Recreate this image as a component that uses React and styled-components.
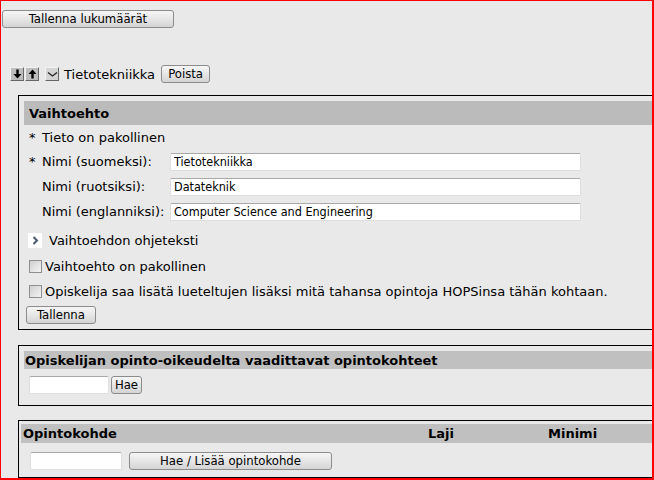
import React from "react";
import styled, { createGlobalStyle } from "styled-components";

const Global = createGlobalStyle`
  html, body { margin: 0; padding: 0; background: #e9e9e9; }
  body { font-family: "DejaVu Sans", Verdana, sans-serif; font-size: 13px; color: #000; }
`;

const Frame = styled.div`
  width: 654px;
  height: 480px;
  box-sizing: border-box;
  border-style: solid;
  border-color: #ff0000;
  border-width: 1px 2px 2px 1px;
  background: #e9e9e9;
  overflow: hidden;
  padding: 9px 0 0 1px;
`;

const Inner = styled.div`
  width: 720px;
`;

const Button = styled.button`
  box-sizing: border-box;
  height: ${p => p.$h || 18}px;
  width: ${p => p.$w}px;
  padding: 0;
  margin: 0;
  border: 1px solid #8c8c8c;
  border-radius: 3px;
  background: linear-gradient(#f6f6f6, #e6e6e6 50%, #d4d4d4);
  font-family: "DejaVu Sans Condensed", "DejaVu Sans", sans-serif;
  font-size: 13px;
  color: #000;
  line-height: 16px;
  flex: none;
`;

const ItemRow = styled.div`
  display: flex;
  align-items: center;
  height: 18px;
  margin: 37px 0 12px 8px;
`;

const IconBtn = styled.span`
  width: 14px;
  height: 14px;
  box-sizing: border-box;
  display: inline-flex;
  align-items: center;
  justify-content: center;
  background: ${p => (p.$light ? "#d4d4d4" : "#bdbdbd")};
  border: 1px solid;
  border-color: #f2f2f2 #666 #666 #f2f2f2;
  margin-right: ${p => p.$mr || 0}px;
  flex: none;
`;

const ItemName = styled.span`
  margin: 0 6px 0 5px;
  font-size: 13px;
`;

const Box = styled.div`
  margin-left: 16px;
  border: 1px solid #000;
  padding: ${p => p.$pad || "5px 0 0 5px"};
  height: ${p => p.$h}px;
  box-sizing: border-box;
`;

const Band = styled.div`
  height: ${p => p.$h}px;
  background: ${p => p.$bg || "#bbbbbb"};
  font-weight: bold;
  font-size: 13px;
  display: flex;
  align-items: center;
  padding-left: ${p => p.$pl}px;
`;

const Content = styled.div`
  padding-left: ${p => p.$pl || 5}px;
`;

const Line = styled.div`
  display: flex;
  align-items: center;
  height: ${p => p.$h}px;
  margin-left: ${p => p.$ml || 0}px;
`;

const Req = styled.span`
  width: 13px;
  flex: none;
`;

const Label = styled.span`
  width: 128px;
  flex: none;
`;

const Input = styled.input`
  box-sizing: border-box;
  width: ${p => p.$w}px;
  height: 18px;
  margin: 0;
  padding: 0 3px;
  background: #fff;
  border: 1px solid #dedede;
  border-top-color: #a9a9a9;
  border-radius: 2px;
  font-family: "DejaVu Sans Condensed", "DejaVu Sans", sans-serif;
  font-size: 12.5px;
  color: #000;
  margin-right: ${p => p.$mr || 0}px;
  flex: none;
  outline: none;
`;

const Toggle = styled.span`
  width: 14px;
  height: 15px;
  background: #fff;
  display: inline-flex;
  align-items: center;
  justify-content: center;
  margin: 0 7px 0 -1px;
  flex: none;
`;

const Check = styled.span`
  width: 13px;
  height: 13px;
  box-sizing: border-box;
  border: 1px solid #8f8f8f;
  background: linear-gradient(135deg, #cfcfcf, #f4f4f4);
  margin-right: 3px;
  flex: none;
`;

const HeadGrid = styled.div`
  display: grid;
  grid-template-columns: 405px 120px 1fr;
  height: 19px;
  align-items: center;
  background: #c0c0c0;
  font-weight: bold;
  padding-left: 2px;
`;

const Spacer = styled.div`
  height: ${p => p.$h}px;
`;

const Arrow = ({ up }) => (
  <svg width="9" height="10" viewBox="0 0 9 10">
    {up ? (
      <path d="M4.5 0.5 L8.5 5 L5.7 5 L5.7 9.5 L3.3 9.5 L3.3 5 L0.5 5 Z" fill="#000" />
    ) : (
      <path d="M4.5 9.5 L8.5 5 L5.7 5 L5.7 0.5 L3.3 0.5 L3.3 5 L0.5 5 Z" fill="#000" />
    )}
  </svg>
);

export default function App() {
  return (
    <>
      <Global />
      <Frame>
        <Inner>
          <Button $w={172}>Tallenna lukumäärät</Button>
          <ItemRow>
            <IconBtn $mr={1}><Arrow /></IconBtn>
            <IconBtn $mr={6}><Arrow up /></IconBtn>
            <IconBtn $light>
              <svg width="11" height="7" viewBox="0 0 11 7">
                <path d="M1 1.5 L5.5 5 L10 1.5" stroke="#222" strokeWidth="1.3" fill="none" />
              </svg>
            </IconBtn>
            <ItemName>Tietotekniikka</ItemName>
            <Button $w={49}>Poista</Button>
          </ItemRow>

          <Box $h={235}>
            <Band $h={24} $pl={5}>Vaihtoehto</Band>
            <Content>
              <Line $h={24}><Req>*</Req>Tieto on pakollinen</Line>
              <Line $h={25}><Req>*</Req><Label>Nimi (suomeksi):</Label><Input $w={411} defaultValue="Tietotekniikka" /></Line>
              <Line $h={25}><Req /><Label>Nimi (ruotsiksi):</Label><Input $w={411} defaultValue="Datateknik" /></Line>
              <Line $h={25}><Req /><Label>Nimi (englanniksi):</Label><Input $w={411} defaultValue="Computer Science and Engineering" /></Line>
              <Line $h={32}>
                <Toggle>
                  <svg width="7" height="9" viewBox="0 0 7 9">
                    <path d="M1.5 1 L5 4.5 L1.5 8" stroke="#4b5873" strokeWidth="2" fill="none" />
                  </svg>
                </Toggle>
                Vaihtoehdon ohjeteksti
              </Line>
              <Line $h={21}><Check />Vaihtoehto on pakollinen</Line>
              <Line $h={29}><Check />Opiskelija saa lisätä lueteltujen lisäksi mitä tahansa opintoja HOPSinsa tähän kohtaan.</Line>
              <Line $h={18} $ml={-3}><Button $w={70}>Tallenna</Button></Line>
            </Content>
          </Box>

          <Spacer $h={15} />

          <Box $h={61}>
            <Band $h={18} $pl={1} $bg="#c0c0c0">Opiskelijan opinto-oikeudelta vaadittavat opintokohteet</Band>
            <Spacer $h={7} />
            <Content $pl={5}>
              <Line $h={18}>
                <Input $w={80} $mr={2} />
                <Button $w={31}>Hae</Button>
              </Line>
            </Content>
          </Box>

          <Spacer $h={14} />

          <Box $h={58} $pad="3px 0 0 2px">
            <HeadGrid>
              <span>Opintokohde</span>
              <span>Laji</span>
              <span>Minimi</span>
            </HeadGrid>
            <Spacer $h={8} />
            <Content $pl={9}>
              <Line $h={19}>
                <Input $w={92} $mr={7} />
                <Button $w={203}>Hae / Lisää opintokohde</Button>
              </Line>
            </Content>
          </Box>
        </Inner>
      </Frame>
    </>
  );
}
